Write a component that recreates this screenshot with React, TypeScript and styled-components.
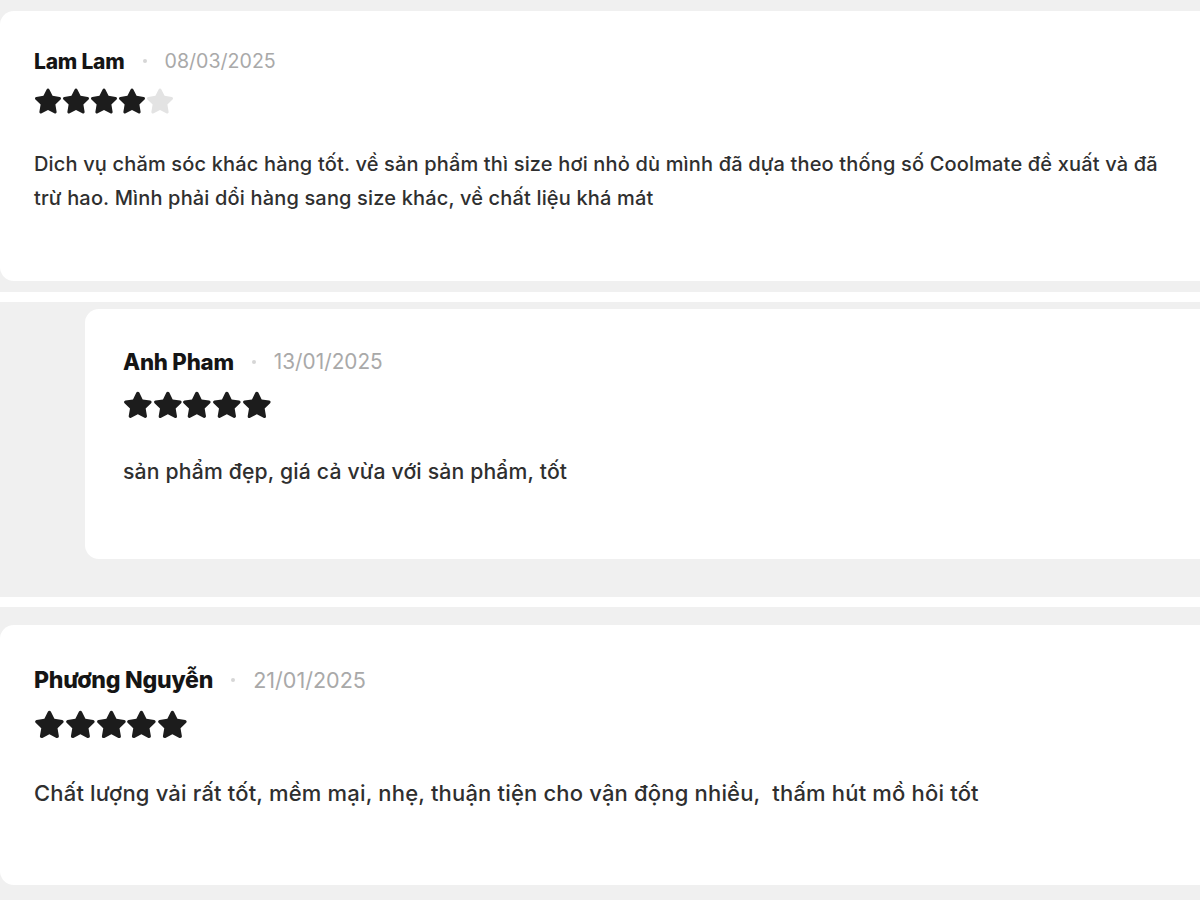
import { FC } from "react";
import styled, { createGlobalStyle } from "styled-components";
import { FaStar } from "react-icons/fa";

const GlobalStyle = createGlobalStyle`
	body {
		margin: 0;
		background: #ffffff;
		font-family: Inter, "Noto Sans", sans-serif;
	}
`;

const Page = styled.div`
	width: 1200px;
	height: 900px;
	overflow: hidden;
	display: flex;
	flex-direction: column;
	gap: 10px;
	background: #ffffff;
`;

const Section = styled.section<{ $pad: string }>`
	background: #f0f0f0;
	padding: ${(p) => p.$pad};
	flex-shrink: 0;
`;

const Card = styled.div<{ $height: number; $scale: number; $padX: number }>`
	box-sizing: border-box;
	height: ${(p) => p.$height}px;
	margin-right: -24px;
	background: #ffffff;
	border-radius: 14px;
	padding: ${(p) => 36 * p.$scale}px 40px 0 ${(p) => p.$padX}px;
	display: flex;
	flex-direction: column;
	font-size: ${(p) => 20 * p.$scale}px;
`;

const Header = styled.div`
	display: flex;
	align-items: center;
	height: 1.4em;
`;

const Name = styled.span`
	font-weight: 800;
	font-size: 1.05em;
	color: #151515;
	letter-spacing: -0.01em;
`;

const Dot = styled.span`
	width: 4px;
	height: 4px;
	border-radius: 50%;
	background: #d6d6d6;
	margin: 0 18px;
`;

const DateText = styled.span`
	font-size: 0.98em;
	color: #a9a9a9;
`;

const Stars = styled.div`
	display: flex;
	margin-top: 0.6em;
	line-height: 0;
`;

const StarIcon = styled(FaStar)<{ $on: boolean }>`
	color: ${(p) => (p.$on ? "#1c1c1c" : "#e3e3e3")};
`;

const Body = styled.p`
	margin: 1.6em 0 0;
	font-size: 1em;
	font-weight: 500;
	line-height: 1.7em;
	letter-spacing: 0.008em;
	white-space: pre-wrap;
	color: #2f2f2f;
`;

interface ReviewProps {
	name: string;
	date: string;
	rating: number;
	text: string;
	height: number;
	scale?: number;
	padX?: number;
}

const Review: FC<ReviewProps> = ({
	name,
	date,
	rating,
	text,
	height,
	scale = 1,
	padX = 34,
}) => (
	<Card $height={height} $scale={scale} $padX={padX}>
		<Header>
			<Name>{name}</Name>
			<Dot />
			<DateText>{date}</DateText>
		</Header>
		<Stars>
			{[1, 2, 3, 4, 5].map((i) => (
				<StarIcon key={i} $on={i <= rating} size={28 * scale} />
			))}
		</Stars>
		<Body>{text}</Body>
	</Card>
);

export default function App() {
	return (
		<Page>
			<GlobalStyle />
			<Section $pad="11px 0 11px 0">
				<Review
					name="Lam Lam"
					date="08/03/2025"
					rating={4}
					height={270}
					text="Dich vụ chăm sóc khác hàng tốt. về sản phẩm thì size hơi nhỏ dù mình đã dựa theo thống số Coolmate đề xuất và đã trừ hao. Mình phải dổi hàng sang size khác, về chất liệu khá mát"
				/>
			</Section>
			<Section $pad="7px 0 38px 85px">
				<Review
					name="Anh Pham"
					date="13/01/2025"
					rating={5}
					height={250}
					scale={1.06}
					padX={38}
					text="sản phẩm đẹp, giá cả vừa với sản phẩm, tốt"
				/>
			</Section>
			<Section $pad="18px 0 40px 0">
				<Review
					name="Phương Nguyễn"
					date="21/01/2025"
					rating={5}
					height={260}
					scale={1.1}
					text="Chất lượng vải rất tốt, mềm mại, nhẹ, thuận tiện cho vận động nhiều,  thấm hút mồ hôi tốt"
				/>
			</Section>
		</Page>
	);
}
